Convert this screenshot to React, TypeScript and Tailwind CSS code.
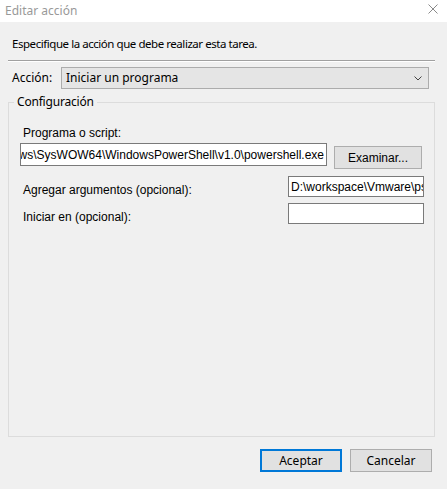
import React from "react";

const ui = "font-['Noto_Sans',sans-serif]";
const classic = "font-['Liberation_Sans',Arial,sans-serif]";

// Native-looking field with a 1px dark frame
const Field: React.FC<{ className?: string; children?: React.ReactNode; alignEnd?: boolean }> = ({
  className = "",
  children,
  alignEnd = false,
}) => (
  <div
    className={`flex items-center overflow-hidden whitespace-nowrap border border-[#7a7a7a] bg-white px-[2px] text-[12px] text-black ${classic} ${
      alignEnd ? "justify-end" : "justify-start"
    } ${className}`}
  >
    {children}
  </div>
);

export default function App() {
  return (
    <div className={`flex h-[489px] w-[447px] flex-col bg-[#f0f0f0] text-black ${ui}`}>
      {/* title bar */}
      <div className="flex h-[22px] items-center justify-between bg-white pl-[5px] pr-[9px]">
        <span className="text-[12px] text-[#999999]">Editar acción</span>
        <svg width="10" height="10" viewBox="0 0 10 10" className="mt-[-4px]">
          <path d="M0.5 0.5 L9.5 9.5 M9.5 0.5 L0.5 9.5" stroke="#8a8a8a" strokeWidth="1" />
        </svg>
      </div>

      <p className="mt-[14px] pl-[12px] text-[11.5px] leading-[16px] tracking-[-0.45px]">
        Especifique la acción que debe realizar esta tarea.
      </p>

      {/* separator */}
      <div className="mx-[8px] mr-[12px] mt-[8px] border-t border-b border-t-[#a0a0a0] border-b-white" />

      {/* action combo */}
      <div className="mt-[5px] flex items-center pl-[12px]">
        <span className="w-[49px] text-[12px]">Acción:</span>
        <div className="flex h-[22px] w-[368px] items-center justify-between border border-[#acacac] bg-[#e5e5e5] pl-[4px] pr-[6px]">
          <span className="text-[12px]">Iniciar un programa</span>
          <svg width="8" height="5" viewBox="0 0 8 5">
            <path d="M0.5 0.5 L4 4 L7.5 0.5" stroke="#444" strokeWidth="1" fill="none" />
          </svg>
        </div>
      </div>

      {/* group box */}
      <fieldset className="mx-[8px] mr-[12px] mt-[5px] h-[343px] border border-[#dcdcdc]">
        <legend className="ml-[5px] px-[3px] text-[12px] leading-[16px] tracking-[-0.2px]">Configuración</legend>

        <div className={`ml-[14px] mt-[16px] text-[12px] leading-[14px] ${classic}`}>Programa o script:</div>
        <div className="mt-[3px] flex items-start">
          <Field className="ml-[11px] h-[23px] w-[307px]" alignEnd>
            C:\Windows\SysWOW64\WindowsPowerShell\v1.0\powershell.exe
          </Field>
          <button
            className={`ml-[7px] mt-[3px] h-[23px] w-[88px] border border-[#adadad] bg-[#e1e1e1] text-[12px] ${classic}`}
          >
            Examinar...
          </button>
        </div>

        <div className="mt-[7px] flex items-start">
          <span className={`ml-[14px] mt-[7px] w-[265px] text-[12px] leading-[14px] ${classic}`}>
            Agregar argumentos (opcional):
          </span>
          <Field className="h-[21px] w-[136px]">D:\workspace\Vmware\ps1</Field>
        </div>

        <div className="mt-[6px] flex items-start">
          <span className={`ml-[14px] mt-[7px] w-[265px] text-[12px] leading-[14px] ${classic}`}>
            Iniciar en (opcional):
          </span>
          <Field className="h-[21px] w-[136px]" />
        </div>
      </fieldset>

      {/* dialog buttons */}
      <div className="mt-[12px] flex justify-end gap-[8px] pr-[15px]">
        <button className="h-[23px] w-[82px] border-2 border-[#0078d7] bg-[#e1e1e1] text-[12px]">Aceptar</button>
        <button className="h-[23px] w-[82px] border border-[#adadad] bg-[#e1e1e1] text-[12px]">Cancelar</button>
      </div>
    </div>
  );
}
